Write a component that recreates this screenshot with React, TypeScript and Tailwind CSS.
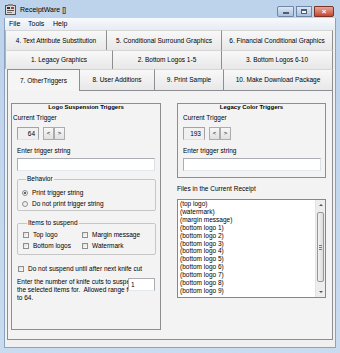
import React from "react";

const font = "font-['Liberation_Sans',Arial,sans-serif]";

const topRows: [string, number][][] = [
  [
    ["4. Text Attribute Substitution", 102],
    ["5. Conditional Surround Graphics", 115],
    ["6. Financial Conditional Graphics", 111],
  ],
  [
    ["1. Legacy Graphics", 108],
    ["2. Bottom Logos 1-5", 109],
    ["3. Bottom Logos 6-10", 111],
  ],
];

const files = [
  "(top logo)",
  "(watermark)",
  "(margin message)",
  "(bottom logo 1)",
  "(bottom logo 2)",
  "(bottom logo 3)",
  "(bottom logo 4)",
  "(bottom logo 5)",
  "(bottom logo 6)",
  "(bottom logo 7)",
  "(bottom logo 8)",
  "(bottom logo 9)",
];

function AppIcon() {
  return (
    <svg width="11" height="11" viewBox="0 0 11 11">
      <rect x="0.5" y="1.5" width="10" height="9" fill="#d9d9d9" stroke="#555" />
      <rect x="2" y="3" width="3" height="2" fill="#333" />
      <rect x="6" y="3" width="3" height="2" fill="#b33" />
      <rect x="2" y="6" width="7" height="1" fill="#555" />
      <rect x="2" y="8" width="5" height="1" fill="#777" />
      <rect x="3" y="0" width="5" height="2" fill="#8a8a8a" />
    </svg>
  );
}

function Tab({ label, w, first }: { label: string; w: number; first?: boolean }) {
  return (
    <div
      className={`h-full flex items-center justify-center border-t border-r border-t-[#d6d6d6] border-r-[#8e8e8e] bg-gradient-to-b from-[#f8f8f8] to-[#e8e8e8] ${first ? "border-l border-l-[#b4b4b4]" : ""}`}
      style={{ width: w }}
    >
      {label}
    </div>
  );
}

function NumBox({ value }: { value: string }) {
  return (
    <div className="w-[22px] h-[13px] border border-[#a3a3a3] border-b-[#e2e2e2] flex items-center justify-end pr-[3px] bg-[#f0f0f0]">
      {value}
    </div>
  );
}

function ArrowBtn({ ch }: { ch: string }) {
  return (
    <div className="w-[11px] h-[13px] border border-[#acacac] bg-gradient-to-b from-[#f7f7f7] to-[#e1e1e1] flex items-center justify-center text-[6px]">
      {ch}
    </div>
  );
}

function TextBox({ w, value }: { w: number; value?: string }) {
  return (
    <div
      className="h-[13px] bg-white border border-[#abadb3] border-b-[#e3e9ef] border-r-[#dbdfe6] flex items-center pl-[2px]"
      style={{ width: w }}
    >
      {value}
    </div>
  );
}

function Radio({ checked, label }: { checked?: boolean; label: string }) {
  return (
    <div className="h-[11px] flex items-center">
      <div className="w-[6px] h-[6px] rounded-full border border-[#8e8f8f] bg-gradient-to-br from-[#e0e0e0] to-white flex items-center justify-center">
        {checked && <div className="w-[2px] h-[2px] rounded-full bg-[#2a3a4a]" />}
      </div>
      <span className="ml-[4px]">{label}</span>
    </div>
  );
}

function Check({ label }: { label: string }) {
  return (
    <div className="h-[11px] flex items-center">
      <div className="w-[6px] h-[6px] border border-[#8e8f8f] bg-gradient-to-br from-[#dcdcdc] to-white" />
      <span className="ml-[4px]">{label}</span>
    </div>
  );
}

function TriggerBox({ title, value, left }: { title: string; value: string; left: number }) {
  return (
    <>
      <div className="leading-[7px] text-center font-bold text-[6px]">{title}</div>
      <div className="mt-[3px] leading-[8px]" style={{ paddingLeft: left === 5 ? 1 : 5 }}>
        Current Trigger
      </div>
      <div className="mt-[5px] flex" style={{ marginLeft: 5 }}>
        <NumBox value={value} />
        <div className="ml-[4px] flex">
          <ArrowBtn ch="<" />
          <ArrowBtn ch=">" />
        </div>
      </div>
      <div className="mt-[7px] leading-[8px] ml-[5px]">Enter trigger string</div>
      <div className="mt-[3px] ml-[5px]">
        <TextBox w={138} />
      </div>
    </>
  );
}

export default function App() {
  return (
    <div
      className={`w-[340px] h-[353px] flex flex-col overflow-hidden bg-gradient-to-b from-[#bdd3ec] to-[#c9dbef] text-[6.5px] text-black ${font}`}
    >
      {/* title bar */}
      <div className="h-[18px] shrink-0 flex items-start">
        <div className="ml-[5px] mt-[4px]">
          <AppIcon />
        </div>
        <div className="ml-[4px] mt-[6px] text-[7px] leading-[8px]">ReceiptWare []</div>
        <div className="ml-auto mr-[6px] mt-[6px] flex">
          <div className="w-[17px] h-[11px] rounded-l-[2px] border border-[#6f86a5] bg-gradient-to-b from-[#dce7f4] to-[#a9c0dc] flex items-end justify-center pb-[2px]">
            <div className="w-[6px] h-[2px] bg-white border border-[#4d5f78] border-[0.5px]" />
          </div>
          <div className="w-[16px] h-[11px] ml-[2px] border border-[#6f86a5] bg-gradient-to-b from-[#dce7f4] to-[#a9c0dc] flex items-center justify-center">
            <div className="w-[6px] h-[5px] border border-[#4d5f78] border-t-2 bg-[#f4f7fb]" />
          </div>
          <div className="w-[20px] h-[11px] ml-[2px] rounded-r-[2px] border border-[#7a3326] bg-gradient-to-b from-[#e6a697] to-[#c8442b] flex items-center justify-center text-white font-bold text-[8px] leading-none">
            ×
          </div>
        </div>
      </div>

      {/* client area */}
      <div className="flex-1 mx-[4px] mb-[5px] border border-t-0 border-[#8aa2bf] flex flex-col bg-[#f0f0f0]">
        {/* menu */}
        <div className="h-[12px] shrink-0 flex items-center text-[7px] bg-gradient-to-b from-[#f7f9fc] to-[#e6ecf4]">
          <span className="ml-[4px] w-[19px]">File</span>
          <span className="w-[25px]">Tools</span>
          <span>Help</span>
        </div>

        {/* tab headers */}
        {topRows.map((row, i) => (
          <div key={i} className={`flex shrink-0 ${i === 0 ? "h-[20px]" : "h-[19px]"}`}>
            {row.map(([label, w], j) => (
              <Tab key={label} label={label} w={w} first={j === 0} />
            ))}
          </div>
        ))}
        <div className="h-[21px] shrink-0 flex items-end ml-[2px]">
          <div className="relative z-10 -mb-[1px] h-[22px] w-[73px] flex items-center justify-center border-t border-x border-[#8c8e94] bg-[#f5f5f5]">
            7. OtherTriggers
          </div>
          <div className="h-full flex">
            <Tab label="8. User Additions" w={75} />
            <Tab label="9. Print Sample" w={69} />
            <Tab label="10. Make Download Package" w={109} />
          </div>
        </div>

        {/* tab panel */}
        <div className="ml-[2px] w-[326px] h-[250px] shrink-0 border border-[#8c8e94] bg-[#f3f3f3] flex pl-[3px] pt-[12px]">
          {/* left column */}
          <div className="w-[150px] h-[227px] border border-[#8e8e8e] flex flex-col">
            <TriggerBox title="Logo Suspension Triggers" value="64" left={5} />

            <fieldset className="mt-[4px] ml-[5px] w-[139px] border border-[#c6c6c6] rounded-[2px] pl-[4px] pt-[4px] pb-[1px]">
              <legend className="ml-[4px] px-[1px] leading-[8px]">Behavior</legend>
              <Radio checked label="Print trigger string" />
              <Radio label="Do not print trigger string" />
            </fieldset>

            <fieldset className="mt-[8px] ml-[5px] w-[139px] border border-[#c6c6c6] rounded-[2px] pl-[5px] pt-[2px] pb-[3px]">
              <legend className="ml-[4px] px-[1px] leading-[8px]">Items to suspend</legend>
              <div className="grid grid-cols-[59px_1fr]">
                <Check label="Top logo" />
                <Check label="Margin message" />
                <Check label="Bottom logos" />
                <Check label="Watermark" />
              </div>
            </fieldset>

            <div className="mt-[8px] ml-[6px]">
              <Check label="Do not suspend until after next knife cut" />
            </div>

            <div className="mt-[4px] ml-[5px] flex items-start leading-[8px] whitespace-nowrap">
              <div className="w-[111px] overflow-hidden">
                <div>Enter the number of knife cuts to suspend</div>
                <div>the selected items for.&nbsp; Allowed range from 1</div>
                <div>to 64.</div>
              </div>
              <div className="w-[27px] h-[13px] bg-white border border-[#abadb3] border-b-[#e3e9ef] flex items-center pl-[2px]">
                1
              </div>
            </div>
          </div>

          {/* right column */}
          <div className="ml-[16px] w-[149px] flex flex-col">
            <div className="h-[75px] border border-[#8e8e8e] flex flex-col">
              <TriggerBox title="Legacy Color Triggers" value="193" left={6} />
            </div>
            <div className="mt-[7px] leading-[8px]">Files in the Current Receipt</div>
            <div className="mt-[6px] h-[99px] border border-[#828790] bg-white flex">
              <div className="flex-1 pl-[2px] leading-[7.9px] overflow-hidden">
                {files.map((f) => (
                  <div key={f}>{f}</div>
                ))}
              </div>
              <div className="w-[10px] bg-[#ededed] border-l border-[#e4e4e4] flex flex-col">
                <div className="h-[10px] flex items-center justify-center">
                  <div className="w-0 h-0 border-x-[2px] border-x-transparent border-b-[2px] border-b-[#555]" />
                </div>
                <div className="mt-[2px] h-[70px] mx-[1px] rounded-[2px] border border-[#979797] bg-gradient-to-r from-[#f2f2f2] to-[#dcdcdc] flex flex-col items-center justify-center gap-[1px]">
                  <div className="w-[3px] h-px bg-[#7a7a7a]" />
                  <div className="w-[3px] h-px bg-[#7a7a7a]" />
                  <div className="w-[3px] h-px bg-[#7a7a7a]" />
                </div>
                <div className="mt-auto h-[10px] flex items-center justify-center">
                  <div className="w-0 h-0 border-x-[2px] border-x-transparent border-t-[2px] border-t-[#555]" />
                </div>
              </div>
            </div>
          </div>
        </div>
      </div>
    </div>
  );
}
